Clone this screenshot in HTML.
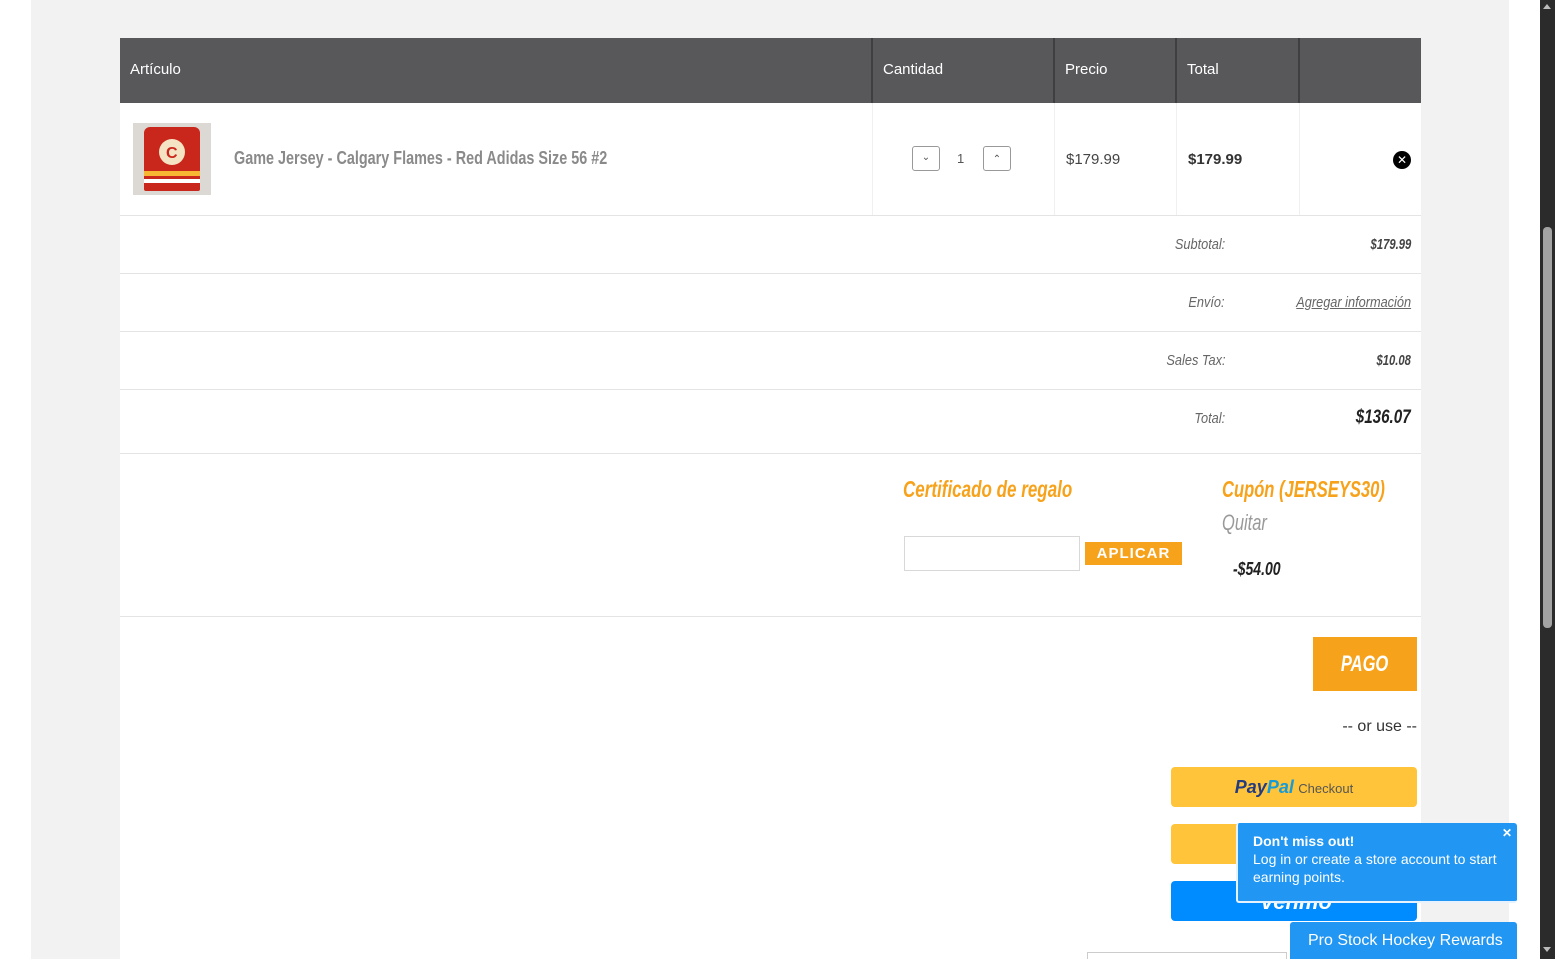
<!DOCTYPE html>
<html><head><meta charset="utf-8"><style>
*{box-sizing:border-box;margin:0;padding:0}
body{width:1555px;height:959px;overflow:hidden;background:#fff;font-family:"Liberation Sans",sans-serif;position:relative}
.abs{position:absolute}
.cond{font-family:"Liberation Sans Narrow","Liberation Sans",sans-serif;font-style:italic;display:inline-block;transform-origin:left center}
</style></head><body>
<div class="abs" style="left:31px;top:0;width:1478px;height:959px;background:#f2f2f2"></div>
<div class="abs" style="left:120px;top:38px;width:1301px;height:921px;background:#fff"></div>
<!-- header -->
<div class="abs" style="left:120px;top:38px;width:1301px;height:65px;background:#58585b"></div>
<div class="abs" style="left:871px;top:38px;width:2px;height:65px;background:#3f3f42"></div>
<div class="abs" style="left:1053px;top:38px;width:2px;height:65px;background:#3f3f42"></div>
<div class="abs" style="left:1175px;top:38px;width:2px;height:65px;background:#3f3f42"></div>
<div class="abs" style="left:1298px;top:38px;width:2px;height:65px;background:#3f3f42"></div>
<div class="abs" style="left:130px;top:61px;color:#fff;font-size:15px">Artículo</div>
<div class="abs" style="left:883px;top:61px;color:#fff;font-size:15px">Cantidad</div>
<div class="abs" style="left:1065px;top:61px;color:#fff;font-size:15px">Precio</div>
<div class="abs" style="left:1187px;top:61px;color:#fff;font-size:15px">Total</div>
<!-- item row -->
<div class="abs" style="left:872px;top:103px;width:1px;height:112px;background:#f0f0f0"></div>
<div class="abs" style="left:1054px;top:103px;width:1px;height:112px;background:#f0f0f0"></div>
<div class="abs" style="left:1176px;top:103px;width:1px;height:112px;background:#f0f0f0"></div>
<div class="abs" style="left:1299px;top:103px;width:1px;height:112px;background:#f0f0f0"></div>
<div class="abs" style="left:133px;top:123px;width:78px;height:72px;background:#dcd8d4">
 <div class="abs" style="left:11px;top:4px;width:56px;height:64px;background:#c9261c;border-radius:6px 6px 2px 2px"></div>
 <div class="abs" style="left:11px;top:48px;width:56px;height:5px;background:#f7b733"></div>
 <div class="abs" style="left:11px;top:56px;width:56px;height:4px;background:#fff"></div>
 <div class="abs" style="left:26px;top:16px;width:26px;height:26px;background:#f4e4c4;border-radius:50%"></div>
 <div class="abs" style="left:33px;top:22px;font-size:16px;font-weight:bold;color:#c9261c">C</div>
</div>
<div class="abs cond" style="left:234px;top:148px;font-size:18px;color:#8a8a8a;font-style:normal;font-weight:bold;transform:scaleX(.8)">Game Jersey - Calgary Flames - Red Adidas Size 56 #2</div>
<div class="abs" style="left:912px;top:146px;width:28px;height:25px;border:1px solid #999;border-radius:3px;font-size:10px;color:#555;text-align:center;line-height:22px">⌄</div>
<div class="abs" style="left:957px;top:151px;font-size:13px;color:#555">1</div>
<div class="abs" style="left:983px;top:146px;width:28px;height:25px;border:1px solid #999;border-radius:3px;font-size:10px;color:#555;text-align:center;line-height:26px">⌃</div>
<div class="abs" style="left:1066px;top:151px;font-size:15px;color:#444">$179.99</div>
<div class="abs" style="left:1188px;top:151px;font-size:15px;color:#333;font-weight:bold">$179.99</div>
<div class="abs" style="left:1393px;top:151px;width:18px;height:18px;border-radius:50%;background:#000;color:#fff;font-size:12px;text-align:center;line-height:18px">✕</div>
<!-- summary lines -->
<div class="abs" style="left:120px;top:215px;width:1301px;height:1px;background:#e4e4e4"></div>
<div class="abs" style="left:120px;top:273px;width:1301px;height:1px;background:#e4e4e4"></div>
<div class="abs" style="left:120px;top:331px;width:1301px;height:1px;background:#e4e4e4"></div>
<div class="abs" style="left:120px;top:389px;width:1301px;height:1px;background:#e4e4e4"></div>
<div class="abs" style="left:120px;top:453px;width:1301px;height:1px;background:#e4e4e4"></div>
<div class="abs" style="left:120px;top:616px;width:1301px;height:1px;background:#e4e4e4"></div>
<div class="abs" style="right:330px;top:236px;font-size:15px;color:#666"><span class="cond" style="transform:scaleX(.85);transform-origin:right center">Subtotal:</span></div>
<div class="abs" style="right:144px;top:236px;font-size:15px;color:#444;font-weight:bold"><span class="cond" style="transform:scaleX(.75);transform-origin:right center">$179.99</span></div>
<div class="abs" style="right:330px;top:294px;font-size:15px;color:#666"><span class="cond" style="transform:scaleX(.85);transform-origin:right center">Envío:</span></div>
<div class="abs" style="right:144px;top:294px;font-size:15px;color:#666"><span class="cond" style="transform:scaleX(.85);transform-origin:right center;text-decoration:underline">Agregar información</span></div>
<div class="abs" style="right:330px;top:352px;font-size:15px;color:#666"><span class="cond" style="transform:scaleX(.85);transform-origin:right center">Sales Tax:</span></div>
<div class="abs" style="right:144px;top:352px;font-size:15px;color:#444;font-weight:bold"><span class="cond" style="transform:scaleX(.75);transform-origin:right center">$10.08</span></div>
<div class="abs" style="right:330px;top:410px;font-size:15px;color:#666"><span class="cond" style="transform:scaleX(.85);transform-origin:right center">Total:</span></div>
<div class="abs" style="right:144px;top:407px;font-size:19px;color:#222;font-weight:bold"><span class="cond" style="transform:scaleX(.8);transform-origin:right center">$136.07</span></div>
<!-- coupon -->
<div class="abs cond" style="left:903px;top:476px;font-size:23px;color:#f7a21b;font-weight:bold;transform:scaleX(.74)">Certificado de regalo</div>
<div class="abs" style="left:904px;top:536px;width:176px;height:35px;border:1px solid #d8d8d8"></div>
<div class="abs" style="left:1085px;top:542px;width:97px;height:23px;background:#f7a21b;color:#fff;font-weight:bold;font-size:15px;text-align:center;line-height:23px;letter-spacing:1px">APLICAR</div>
<div class="abs cond" style="left:1222px;top:476px;font-size:23px;color:#f7a21b;font-weight:bold;transform:scaleX(.72)">Cupón (JERSEYS30)</div>
<div class="abs cond" style="left:1222px;top:510px;font-size:22px;color:#999;transform:scaleX(.75)">Quitar</div>
<div class="abs cond" style="left:1233px;top:559px;font-size:18px;color:#222;font-weight:bold;transform:scaleX(.78)">-$54.00</div>
<!-- checkout -->
<div class="abs" style="left:1313px;top:637px;width:104px;height:54px;background:#f7a21b;color:#fff;text-align:center;line-height:54px;font-size:22px;font-weight:bold"><span class="cond" style="transform:scaleX(.75);transform-origin:center">PAGO</span></div>
<div class="abs" style="right:138px;top:718px;font-size:16px;color:#333">-- or use --</div>
<div class="abs" style="left:1171px;top:767px;width:246px;height:40px;background:#ffc439;border-radius:4px;text-align:center;line-height:40px"><span style="font-weight:bold;font-style:italic;font-size:18px;color:#253b80">Pay</span><span style="font-weight:bold;font-style:italic;font-size:18px;color:#179bd7">Pal</span> <span style="font-size:13px;color:#555">Checkout</span></div>
<div class="abs" style="left:1171px;top:824px;width:246px;height:40px;background:#ffc439;border-radius:4px"></div>
<div class="abs" style="left:1171px;top:881px;width:246px;height:40px;background:#008cff;border-radius:4px;overflow:hidden"><div class="abs" style="left:90px;top:8px;color:#fff;font-weight:bold;font-style:italic;font-size:22px">venmo</div></div>
<div class="abs" style="left:1087px;top:952px;width:200px;height:7px;border:1px solid #ccc;border-bottom:none"></div>
<!-- popup -->
<div class="abs" style="left:1236px;top:823px;width:281px;height:80px;background:#2196f3;border:2px solid #e6f2fd;border-right:none;border-top:none;border-radius:3px;color:#fff;padding:9px 15px;font-size:14px;line-height:18px"><b>Don't miss out!</b><br>Log in or create a store account to start earning points.</div>
<div class="abs" style="left:1502px;top:826px;color:#fff;font-size:12px;font-weight:bold">✕</div>
<div class="abs" style="left:1290px;top:922px;width:227px;height:37px;background:#2196f3;border-radius:3px 3px 0 0;color:#fff;font-size:16px;line-height:37px;padding-left:18px">Pro Stock Hockey Rewards</div>
<!-- scrollbar -->
<div class="abs" style="left:1540px;top:0;width:15px;height:959px;background:#2b2b2b"></div>
<div class="abs" style="left:1543px;top:227px;width:9px;height:401px;background:#a3a3a3;border-radius:4px"></div>
<div class="abs" style="left:1543px;top:4px;width:0;height:0;border:4px solid transparent;border-bottom:5px solid #bbb;border-top:none"></div>
<div class="abs" style="left:1543px;top:947px;width:0;height:0;border:4px solid transparent;border-top:5px solid #bbb;border-bottom:none"></div>
</body></html>
